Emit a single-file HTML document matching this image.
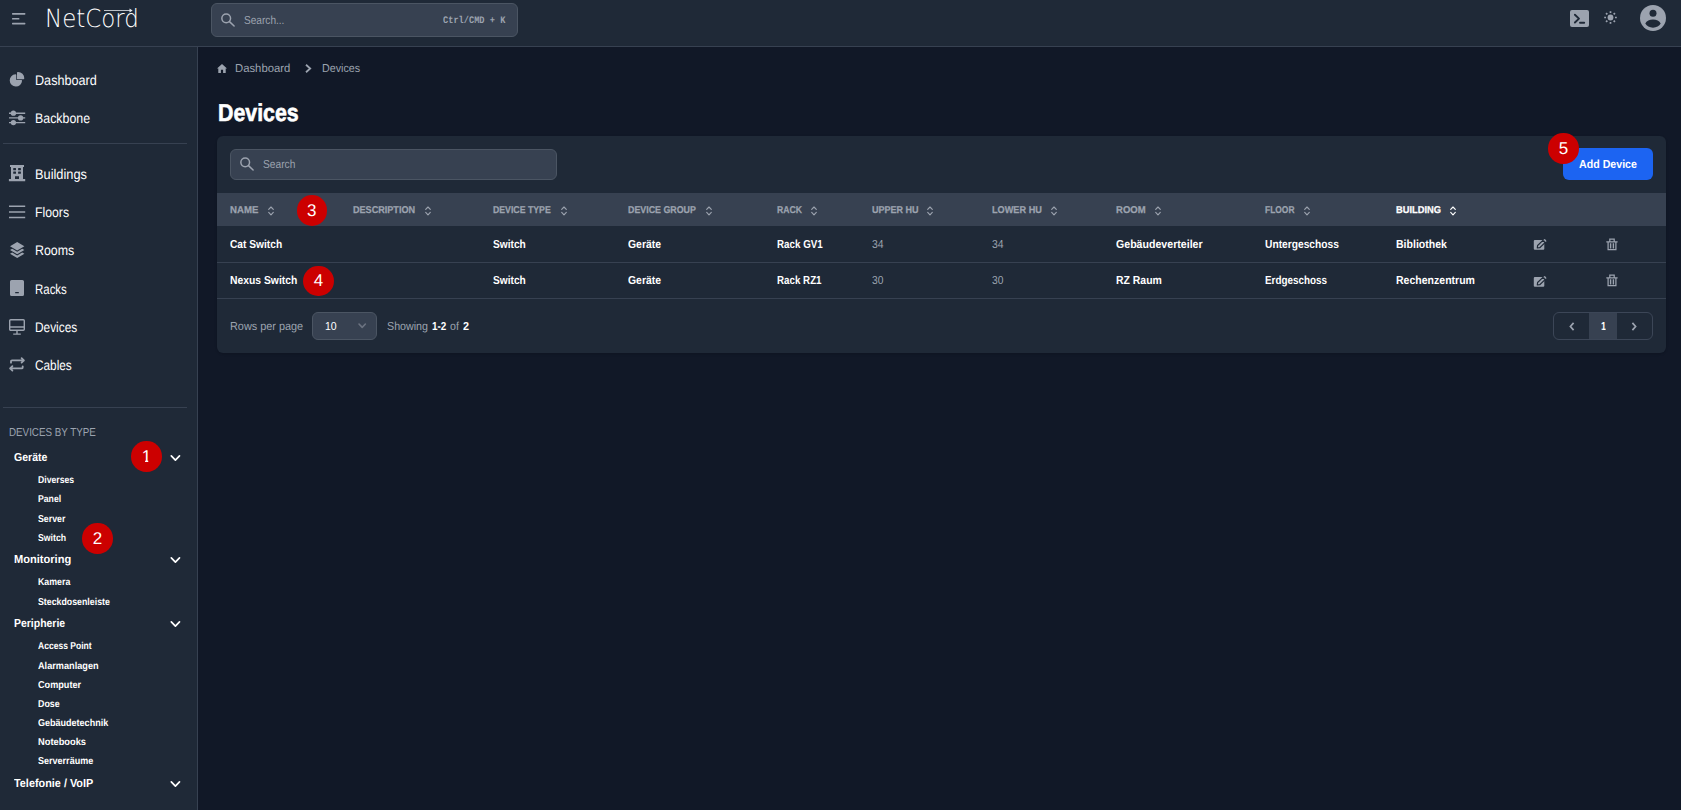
<!DOCTYPE html>
<html lang="en"><head><meta charset="utf-8"><title>NetCord - Devices</title>
<style>
*{box-sizing:border-box;margin:0;padding:0}
html,body{width:1681px;height:810px;overflow:hidden;background:#111827;font-family:"Liberation Sans",Arial,sans-serif}
body{position:relative}
ul{list-style:none}
.t{position:absolute;white-space:nowrap;transform-origin:0 50%;display:block;text-rendering:geometricPrecision}
.i{position:absolute;display:block;overflow:visible}
.abs{position:absolute}
header{position:absolute;left:0;top:0;width:1681px;height:47px;background:#1f2937;border-bottom:1px solid #374151}
aside{position:absolute;left:0;top:47px;width:198px;height:763px;background:#1f2937;border-right:1px solid #374151}
main{position:absolute;left:198px;top:47px;width:1483px;height:763px}
hr{position:absolute;border:0;height:1px;background:#374151}
.card{position:absolute;background:#1f2937;border-radius:6px;box-shadow:0 1px 3px 0 rgba(0,0,0,.1),0 1px 2px -1px rgba(0,0,0,.1)}
.inp{position:absolute;background:#374151;border:1px solid #4b5563;border-radius:6px}
.badge{position:absolute;width:30.4px;height:30.4px;border-radius:50%;background:#cc0000}
.badge .t{left:0;width:30.4px;text-align:center;transform-origin:50% 50%}
table{position:absolute;border-collapse:collapse;table-layout:fixed}
th,td{position:relative;padding:0;text-align:left}
thead tr{background:#374151;height:33px}
tbody tr{height:36px;border-bottom:1px solid #374151}

.nav{font:400 14px/16px "Liberation Sans",Arial,sans-serif;color:#ffffff}
.cap{font:400 11.6px/12px "Liberation Sans",Arial,sans-serif;color:#9ca3af}
.grp{font:700 11.6px/12px "Liberation Sans",Arial,sans-serif;color:#ffffff}
.sub{font:700 10px/11px "Liberation Sans",Arial,sans-serif;color:#ffffff}
.bc{font:400 11.6px/12px "Liberation Sans",Arial,sans-serif;color:#9ca3af}
.h1{font:700 24.4px/27px "Liberation Sans",Arial,sans-serif;color:#ffffff}
.ph{font:400 11.6px/12px "Liberation Sans",Arial,sans-serif;color:#9ca3af}
.kbd{font:700 10px/11px "Liberation Mono",monospace;color:#9ca3af}
.th{font:700 9.9px/11px "Liberation Sans",Arial,sans-serif;color:#9ca3af}
.thw{font:700 9.9px/11px "Liberation Sans",Arial,sans-serif;color:#ffffff}
.td{font:700 11.6px/12px "Liberation Sans",Arial,sans-serif;color:#ffffff}
.tdn{font:400 11.6px/12px "Liberation Sans",Arial,sans-serif;color:#9ca3af}
.btn{font:700 11.6px/12px "Liberation Sans",Arial,sans-serif;color:#ffffff}
.ft{font:400 11.6px/12px "Liberation Sans",Arial,sans-serif;color:#9ca3af}
.ftw{font:700 11.6px/12px "Liberation Sans",Arial,sans-serif;color:#ffffff}
.sel{font:400 11.6px/12px "Liberation Sans",Arial,sans-serif;color:#ffffff}
.logo{font:400 25px/29px "DejaVu Sans Light","DejaVu Sans","Liberation Sans",sans-serif;color:#ffffff}
.bdg{font:400 17px/19px "Liberation Sans",Arial,sans-serif;color:#ffffff}

.h1{-webkit-text-stroke:.6px #fff}.th{-webkit-text-stroke:.25px #9ca3af}.thw{-webkit-text-stroke:.25px #fff}
</style></head><body>
<header>
<button class="abs" style="left:6px;top:6px;width:26px;height:26px;background:none;border:0" aria-label="Toggle sidebar"><svg class="i" style="left:6.0px;top:7.0px" width="14" height="11" viewBox="0 0 14 11" ><g fill="#9ca3af"><rect x="0" y="0" width="13.4" height="1.7" rx=".6"/><rect x="0" y="4.9" width="7.4" height="1.7" rx=".6"/><rect x="0" y="9.7" width="13.4" height="1.7" rx=".6"/></g></svg></button>
<a class="abs" style="left:47px;top:4px;width:92px;height:28px"><span class="t logo" style="left:-1.97px;top:0.0px;transform:scaleX(0.9177);">NetCord</span><svg class="i" style="left:56.5px;top:4.0px" width="29" height="5" viewBox="0 0 29 5" ><path d="M0 2.5h27" stroke="#e5e7eb" stroke-width=".8" fill="none"/><path d="M25.500 .6 28.600 2.500 25.500 4.400Z" fill="#e5e7eb"/></svg></a>
<form class="inp" style="left:211px;top:3px;width:307px;height:34px"><svg class="i" style="left:9.2px;top:8.8px" width="14" height="14" viewBox="0 0 14 14" ><g fill="none" stroke="#9ca3af" stroke-width="1.5"><circle cx="5.2" cy="5.3" r="4.350"/><path d="M8.500 8.600l4.600 4.400" stroke-linecap="round"/></g></svg><span class="t ph" style="left:31.62px;top:11.0px;transform:scaleX(0.8710);">Search...</span><span class="t kbd" style="left:230.72px;top:12.0px;transform:scaleX(0.8659);">Ctrl/CMD + K</span></form>
<svg class="i" style="left:1570.0px;top:10.0px" width="19" height="17" viewBox="0 0 19 17" ><rect width="19" height="17" rx="2" fill="#9ca3af"/><path d="M4.900 4.700 9 8.600 4.900 12.500M10 12.700h4.200" fill="none" stroke="#1f2937" stroke-width="1.9" stroke-linecap="round" stroke-linejoin="round"/></svg>
<svg class="i" style="left:1604.4px;top:11.3px" width="13" height="13" viewBox="0 0 13 13" ><circle cx="6.5" cy="6.5" r="2.900" fill="#9ca3af"/><g stroke="#9ca3af" stroke-width="1.7"><path d="M11.00 6.50L12.80 6.50"/><path d="M9.68 9.68L10.95 10.95"/><path d="M6.50 11.00L6.50 12.80"/><path d="M3.32 9.68L2.05 10.95"/><path d="M2.00 6.50L0.20 6.50"/><path d="M3.32 3.32L2.05 2.05"/><path d="M6.50 2.00L6.50 0.20"/><path d="M9.68 3.32L10.95 2.05"/></g></svg>
<svg class="i" style="left:1640.0px;top:5.0px" width="26" height="26" viewBox="0 0 26 26" ><circle cx="13" cy="13" r="13" fill="#9ca3af"/><circle cx="13" cy="8.300" r="3.500" fill="#1f2937"/><path d="M5.300 18.600C6.500 15.600 9.500 14.500 13 14.500s6.500 1.100 7.700 4.100C19.300 21.200 16.400 22.700 13 22.700S6.700 21.200 5.300 18.600Z" fill="#1f2937"/></svg>
</header>
<aside><nav>
<ul>
<li><svg class="i" style="left:9.3px;top:24.9px" width="16" height="15.27" viewBox="0 0 22 21" ><g fill="#9ca3af"><path d="M16.975 11H10V4.025a1 1 0 0 0-1.066-.998 8.5 8.5 0 1 0 9.039 9.039.999.999 0 0 0-1-1.066h.002Z"/><path d="M12.5 0c-.157 0-.311.01-.565.027A1 1 0 0 0 11 1.02V10h8.975a1 1 0 0 0 1-.935c.013-.188.028-.374.028-.565A8.51 8.51 0 0 0 12.5 0Z"/></g></svg><a class="t nav" style="left:34.61px;top:25.0px;transform:scaleX(0.9014);">Dashboard</a></li>
<li><svg class="i" style="left:9.0px;top:63.0px" width="16" height="16" viewBox="0 0 16 16" ><g stroke="#9ca3af" stroke-width="1.350" fill="none"><path d="M0 3.2h16.2M0 7.9h16.2M0 12.6h16.2"/></g><g fill="#9ca3af"><circle cx="4.4" cy="3.2" r="2.650"/><circle cx="11.6" cy="7.9" r="2.650"/><circle cx="4.4" cy="12.6" r="2.650"/></g></svg><a class="t nav" style="left:34.61px;top:63.0px;transform:scaleX(0.8840);">Backbone</a></li>
</ul>
<hr style="left:3px;top:96px;width:184px">
<ul>
<li><svg class="i" style="left:9.0px;top:118.0px" width="16" height="16" viewBox="0 0 16 16" ><path fill="#9ca3af" fill-rule="evenodd" d="M1 0h14v2h-1V14h2.200v2.200H-.1V14H2V2H1Z M4.200 3.400a.5.5 0 0 1 .5-.5h1.800a.5.5 0 0 1 .5.5v1.300a.5.5 0 0 1-.5.5H4.700a.5.5 0 0 1-.5-.5Z M9.100 3.400a.5.5 0 0 1 .5-.5h1.800a.5.5 0 0 1 .5.5v1.300a.5.5 0 0 1-.5.5H9.600a.5.5 0 0 1-.5-.5Z M4.200 6.900a.5.5 0 0 1 .5-.5h1.800a.5.5 0 0 1 .5.5v1.400a.5.5 0 0 1-.5.5H4.700a.5.5 0 0 1-.5-.5Z M9.100 6.900a.5.5 0 0 1 .5-.5h1.800a.5.5 0 0 1 .5.5v1.400a.5.5 0 0 1-.5.5H9.600a.5.5 0 0 1-.5-.5Z M6 11.200h4V14H6Z"/></svg><a class="t nav" style="left:34.55px;top:119.0px;transform:scaleX(0.9141);">Buildings</a></li>
<li><svg class="i" style="left:9.0px;top:158.0px" width="16" height="14" viewBox="0 0 16 14" ><path stroke="#9ca3af" stroke-width="1.5" d="M0 1.200h16.200M0 6.900h16.200M0 12.600h16.200"/></svg><a class="t nav" style="left:34.62px;top:157.0px;transform:scaleX(0.8766);">Floors</a></li>
<li><svg class="i" style="left:9.7px;top:194.9px" width="14.4" height="16.2" viewBox="0 0 14.4 16.2" ><g fill="#9ca3af"><path d="M7.2 0 14.4 4.3 7.2 8.6 0 4.3Z"/><path d="M0 8.05 2.22 6.73 7.2 9.7 12.18 6.73 14.4 8.05 7.2 12.35Z"/><path d="M0 11.8 2.22 10.48 7.2 13.45 12.18 10.48 14.4 11.8 7.2 16.1Z"/></g></svg><a class="t nav" style="left:34.73px;top:195.0px;transform:scaleX(0.8867);">Rooms</a></li>
<li><svg class="i" style="left:10.0px;top:233.0px" width="14" height="16" viewBox="0 0 14 16" ><path fill="#9ca3af" fill-rule="evenodd" d="M1.6 0h10.8A1.6 1.6 0 0 1 14 1.6v12.8a1.6 1.6 0 0 1-1.6 1.6H1.6A1.6 1.6 0 0 1 0 14.4V1.6A1.6 1.6 0 0 1 1.6 0Z M5.2 12v1.2h3.6V12Z"/></svg><a class="t nav" style="left:34.57px;top:234.0px;transform:scaleX(0.8173);">Racks</a></li>
<li><svg class="i" style="left:9.0px;top:272.0px" width="16" height="16" viewBox="0 0 16 16" ><g fill="none" stroke="#9ca3af" stroke-width="1.4"><rect x=".7" y=".7" width="14.6" height="10.6" rx="1"/><path d="M.7 8h14.6M8 11.3v3.6M4.2 15.1h7.6"/></g></svg><a class="t nav" style="left:34.72px;top:272.0px;transform:scaleX(0.8465);">Devices</a></li>
<li><svg class="i" style="left:9.2px;top:310.0px" width="16" height="15" viewBox="0 0 16 15" ><path fill="none" stroke="#9ca3af" stroke-width="1.8" stroke-linecap="round" stroke-linejoin="round" d="M2 5.700V4.400a1 1 0 0 1 1-1H14.900M12.600 1.200 14.900 3.400 12.600 5.600M13.700 9.300v1.100a1 1 0 0 1-1 1H1.100M3.400 9.200 1.100 11.400 3.400 13.600"/></svg><a class="t nav" style="left:34.92px;top:310.0px;transform:scaleX(0.8436);">Cables</a></li>
</ul>
<hr style="left:3px;top:360px;width:184px">
<h3 class="t cap" style="left:9.29px;top:380.0px;transform:scaleX(0.8453);">DEVICES BY TYPE</h3>
<ul>
<li><a class="t grp" style="left:13.96px;top:405.0px;transform:scaleX(0.9114);">Geräte</a><svg class="i" style="left:170.3px;top:407.4px" width="11" height="8" viewBox="0 0 11 8" ><path fill="none" stroke="#fff" stroke-width="1.7" stroke-linecap="round" stroke-linejoin="round" d="M1.300 1.900 5.400 6.100 9.500 1.900"/></svg>
<ul>
<li><a class="t sub" style="left:37.70px;top:428.0px;transform:scaleX(0.8658);">Diverses</a></li>
<li><a class="t sub" style="left:37.70px;top:447.0px;transform:scaleX(0.8674);">Panel</a></li>
<li><a class="t sub" style="left:38.00px;top:467.0px;transform:scaleX(0.8793);">Server</a></li>
<li><a class="t sub" style="left:38.00px;top:486.0px;transform:scaleX(0.8709);">Switch</a></li>
</ul>
</li>
<li><a class="t grp" style="left:13.82px;top:507.0px;transform:scaleX(0.9549);">Monitoring</a><svg class="i" style="left:170.3px;top:509.2px" width="11" height="8" viewBox="0 0 11 8" ><path fill="none" stroke="#fff" stroke-width="1.7" stroke-linecap="round" stroke-linejoin="round" d="M1.300 1.900 5.400 6.100 9.500 1.900"/></svg>
<ul>
<li><a class="t sub" style="left:37.64px;top:530.0px;transform:scaleX(0.8797);">Kamera</a></li>
<li><a class="t sub" style="left:38.00px;top:550.0px;transform:scaleX(0.8792);">Steckdosenleiste</a></li>
</ul>
</li>
<li><a class="t grp" style="left:13.68px;top:571.0px;transform:scaleX(0.9013);">Peripherie</a><svg class="i" style="left:170.3px;top:573.2px" width="11" height="8" viewBox="0 0 11 8" ><path fill="none" stroke="#fff" stroke-width="1.7" stroke-linecap="round" stroke-linejoin="round" d="M1.300 1.900 5.400 6.100 9.500 1.900"/></svg>
<ul>
<li><a class="t sub" style="left:38.00px;top:594.0px;transform:scaleX(0.8539);">Access Point</a></li>
<li><a class="t sub" style="left:38.00px;top:614.0px;transform:scaleX(0.9158);">Alarmanlagen</a></li>
<li><a class="t sub" style="left:38.00px;top:633.0px;transform:scaleX(0.9118);">Computer</a></li>
<li><a class="t sub" style="left:37.87px;top:652.0px;transform:scaleX(0.8849);">Dose</a></li>
<li><a class="t sub" style="left:38.00px;top:671.0px;transform:scaleX(0.9021);">Gebäudetechnik</a></li>
<li><a class="t sub" style="left:37.87px;top:690.0px;transform:scaleX(0.9286);">Notebooks</a></li>
<li><a class="t sub" style="left:38.00px;top:709.0px;transform:scaleX(0.9032);">Serverräume</a></li>
</ul>
</li>
<li><a class="t grp" style="left:13.96px;top:731.0px;transform:scaleX(0.9369);">Telefonie / VoIP</a><svg class="i" style="left:170.3px;top:733.2px" width="11" height="8" viewBox="0 0 11 8" ><path fill="none" stroke="#fff" stroke-width="1.7" stroke-linecap="round" stroke-linejoin="round" d="M1.300 1.900 5.400 6.100 9.500 1.900"/></svg>
</li>
</ul>
</nav></aside>
<main>
<nav aria-label="Breadcrumb">
<svg class="i" style="left:19.0px;top:17.0px" width="10" height="9" viewBox="0 0 10 9" ><path fill="#9ca3af" d="M5 0 10 4.400H8.700V9H6.100V5.800H3.900V9H1.300V4.400H0Z"/></svg>
<a class="t bc" style="left:36.69px;top:16.0px;transform:scaleX(0.9749);">Dashboard</a>
<svg class="i" style="left:106.5px;top:17.0px" width="7" height="9" viewBox="0 0 7 9" ><path fill="none" stroke="#9ca3af" stroke-width="1.8" d="M1 .8 5.200 4.500 1 8.200"/></svg>
<span class="t bc" style="left:124.30px;top:16.0px;transform:scaleX(0.9251);">Devices</span>
</nav>
<h1 class="t h1" style="left:20.21px;top:53.0px;transform:scaleX(0.8746);">Devices</h1>
<section class="card" style="left:19px;top:89px;width:1449px;height:217px">
<form class="inp" style="left:13px;top:13px;width:327px;height:31px"><svg class="i" style="left:9.2px;top:7.1px" width="14" height="14" viewBox="0 0 14 14" ><g fill="none" stroke="#9ca3af" stroke-width="1.5"><circle cx="5.2" cy="5.3" r="4.350"/><path d="M8.500 8.600l4.600 4.400" stroke-linecap="round"/></g></svg><span class="t ph" style="left:31.83px;top:9.0px;transform:scaleX(0.8806);">Search</span></form>
<button class="abs" style="left:1346px;top:12px;width:90px;height:32px;background:#1c64f2;border:0;border-radius:6px"><span class="t btn" style="left:16.47px;top:11.0px;transform:scaleX(0.9175);">Add Device</span></button>
<table style="left:0;top:57px;width:1449px"><colgroup>
<col style="width:123.0px">
<col style="width:140.3px">
<col style="width:135.0px">
<col style="width:148.4px">
<col style="width:95.0px">
<col style="width:120.0px">
<col style="width:124.3px">
<col style="width:148.7px">
<col style="width:130.9px">
<col style="width:138.4px">
<col style="width:73.0px">
<col style="width:72.0px">
</colgroup><thead><tr>
<th><span class="t th" style="left:12.78px;top:12.0px;transform:scaleX(0.9748);">NAME</span><svg class="i" style="left:50.6px;top:12.5px" width="6" height="10" viewBox="0 0 6 10" ><path fill="none" stroke="#9ca3af" stroke-width="1.15" stroke-linecap="round" stroke-linejoin="round" d="M.7 3.400 3 1 5.300 3.400M.7 6.400 3 8.800 5.300 6.400"/></svg></th>
<th><span class="t th" style="left:12.70px;top:12.0px;transform:scaleX(0.9196);">DESCRIPTION</span><svg class="i" style="left:84.8px;top:12.5px" width="6" height="10" viewBox="0 0 6 10" ><path fill="none" stroke="#9ca3af" stroke-width="1.15" stroke-linecap="round" stroke-linejoin="round" d="M.7 3.400 3 1 5.300 3.400M.7 6.400 3 8.800 5.300 6.400"/></svg></th>
<th><span class="t th" style="left:12.44px;top:12.0px;transform:scaleX(0.8837);">DEVICE TYPE</span><svg class="i" style="left:80.5px;top:12.5px" width="6" height="10" viewBox="0 0 6 10" ><path fill="none" stroke="#9ca3af" stroke-width="1.15" stroke-linecap="round" stroke-linejoin="round" d="M.7 3.400 3 1 5.300 3.400M.7 6.400 3 8.800 5.300 6.400"/></svg></th>
<th><span class="t th" style="left:12.44px;top:12.0px;transform:scaleX(0.8965);">DEVICE GROUP</span><svg class="i" style="left:90.5px;top:12.5px" width="6" height="10" viewBox="0 0 6 10" ><path fill="none" stroke="#9ca3af" stroke-width="1.15" stroke-linecap="round" stroke-linejoin="round" d="M.7 3.400 3 1 5.300 3.400M.7 6.400 3 8.800 5.300 6.400"/></svg></th>
<th><span class="t th" style="left:13.76px;top:12.0px;transform:scaleX(0.8757);">RACK</span><svg class="i" style="left:47.1px;top:12.5px" width="6" height="10" viewBox="0 0 6 10" ><path fill="none" stroke="#9ca3af" stroke-width="1.15" stroke-linecap="round" stroke-linejoin="round" d="M.7 3.400 3 1 5.300 3.400M.7 6.400 3 8.800 5.300 6.400"/></svg></th>
<th><span class="t th" style="left:13.20px;top:12.0px;transform:scaleX(0.9129);">UPPER HU</span><svg class="i" style="left:68.7px;top:12.5px" width="6" height="10" viewBox="0 0 6 10" ><path fill="none" stroke="#9ca3af" stroke-width="1.15" stroke-linecap="round" stroke-linejoin="round" d="M.7 3.400 3 1 5.300 3.400M.7 6.400 3 8.800 5.300 6.400"/></svg></th>
<th><span class="t th" style="left:12.98px;top:12.0px;transform:scaleX(0.9274);">LOWER HU</span><svg class="i" style="left:72.1px;top:12.5px" width="6" height="10" viewBox="0 0 6 10" ><path fill="none" stroke="#9ca3af" stroke-width="1.15" stroke-linecap="round" stroke-linejoin="round" d="M.7 3.400 3 1 5.300 3.400M.7 6.400 3 8.800 5.300 6.400"/></svg></th>
<th><span class="t th" style="left:12.87px;top:12.0px;transform:scaleX(0.9646);">ROOM</span><svg class="i" style="left:51.8px;top:12.5px" width="6" height="10" viewBox="0 0 6 10" ><path fill="none" stroke="#9ca3af" stroke-width="1.15" stroke-linecap="round" stroke-linejoin="round" d="M.7 3.400 3 1 5.300 3.400M.7 6.400 3 8.800 5.300 6.400"/></svg></th>
<th><span class="t th" style="left:12.87px;top:12.0px;transform:scaleX(0.8536);">FLOOR</span><svg class="i" style="left:52.8px;top:12.5px" width="6" height="10" viewBox="0 0 6 10" ><path fill="none" stroke="#9ca3af" stroke-width="1.15" stroke-linecap="round" stroke-linejoin="round" d="M.7 3.400 3 1 5.300 3.400M.7 6.400 3 8.800 5.300 6.400"/></svg></th>
<th><span class="t thw" style="left:13.11px;top:12.0px;transform:scaleX(0.9408);">BUILDING</span><svg class="i" style="left:67.9px;top:12.5px" width="6" height="10" viewBox="0 0 6 10" ><path fill="none" stroke="#fff" stroke-width="1.15" stroke-linecap="round" stroke-linejoin="round" d="M.7 3.400 3 1 5.300 3.400M.7 6.400 3 8.800 5.300 6.400"/></svg></th>
<th></th><th></th></tr></thead><tbody>
<tr>
<td><span class="t td" style="left:13.00px;top:13.0px;transform:scaleX(0.8796);">Cat Switch</span></td>
<td></td>
<td><span class="t td" style="left:12.96px;top:13.0px;transform:scaleX(0.8778);">Switch</span></td>
<td><span class="t td" style="left:13.16px;top:13.0px;transform:scaleX(0.9007);">Geräte</span></td>
<td><span class="t td" style="left:13.02px;top:13.0px;transform:scaleX(0.8445);">Rack GV1</span></td>
<td><span class="t tdn" style="left:13.76px;top:13.0px;transform:scaleX(0.8968);">34</span></td>
<td><span class="t tdn" style="left:13.76px;top:13.0px;transform:scaleX(0.8968);">34</span></td>
<td><span class="t td" style="left:13.00px;top:13.0px;transform:scaleX(0.9145);">Gebäudeverteiler</span></td>
<td><span class="t td" style="left:13.13px;top:13.0px;transform:scaleX(0.8822);">Untergeschoss</span></td>
<td><span class="t td" style="left:13.04px;top:13.0px;transform:scaleX(0.9092);">Bibliothek</span></td>
<td><svg class="i" style="left:12.0px;top:12.0px" width="15" height="13" viewBox="0 0 15 13" ><rect x=".8" y="2" width="10.5" height="9.8" rx="1" fill="#9ca3af"/><polygon points="4.30,9.90 4.60,7.47 9.93,2.37 12.07,4.60 6.74,9.71" fill="#9ca3af" stroke="#1f2937" stroke-width="1.15" stroke-linejoin="round"/><polygon points="10.57,1.75 11.37,0.99 12.72,1.83 13.51,3.22 12.71,3.98" fill="#9ca3af"/></svg></td><td><svg class="i" style="left:12.5px;top:11.6px" width="12" height="13" viewBox="0 0 12 13" ><g fill="none" stroke="#9ca3af" stroke-width="1.25"><path d="M.3 3.800h11.300M3.800 3.600V1.200h4.400v2.400M2.100 4v7.600h7.800V4"/><path stroke-width="1.4" d="M4.600 5.300v5.200M7.400 5.300v5.200"/></g></svg></td>
</tr>
<tr>
<td><span class="t td" style="left:12.52px;top:12.0px;transform:scaleX(0.8926);">Nexus Switch</span></td>
<td></td>
<td><span class="t td" style="left:13.16px;top:12.0px;transform:scaleX(0.8774);">Switch</span></td>
<td><span class="t td" style="left:13.16px;top:12.0px;transform:scaleX(0.9004);">Geräte</span></td>
<td><span class="t td" style="left:13.66px;top:12.0px;transform:scaleX(0.8431);">Rack RZ1</span></td>
<td><span class="t tdn" style="left:13.04px;top:12.0px;transform:scaleX(0.8820);">30</span></td>
<td><span class="t tdn" style="left:13.04px;top:12.0px;transform:scaleX(0.8820);">30</span></td>
<td><span class="t td" style="left:12.52px;top:12.0px;transform:scaleX(0.9010);">RZ Raum</span></td>
<td><span class="t td" style="left:13.66px;top:12.0px;transform:scaleX(0.8522);">Erdgeschoss</span></td>
<td><span class="t td" style="left:13.19px;top:12.0px;transform:scaleX(0.9077);">Rechenzentrum</span></td>
<td><svg class="i" style="left:12.0px;top:12.0px" width="15" height="13" viewBox="0 0 15 13" ><rect x=".8" y="2" width="10.5" height="9.8" rx="1" fill="#9ca3af"/><polygon points="4.30,9.90 4.60,7.47 9.93,2.37 12.07,4.60 6.74,9.71" fill="#9ca3af" stroke="#1f2937" stroke-width="1.15" stroke-linejoin="round"/><polygon points="10.57,1.75 11.37,0.99 12.72,1.83 13.51,3.22 12.71,3.98" fill="#9ca3af"/></svg></td><td><svg class="i" style="left:12.5px;top:11.6px" width="12" height="13" viewBox="0 0 12 13" ><g fill="none" stroke="#9ca3af" stroke-width="1.25"><path d="M.3 3.800h11.300M3.800 3.600V1.200h4.400v2.400M2.100 4v7.600h7.800V4"/><path stroke-width="1.4" d="M4.600 5.300v5.200M7.400 5.300v5.200"/></g></svg></td>
</tr>
</tbody></table>
<span class="t ft" style="left:12.53px;top:185.0px;transform:scaleX(0.9379);">Rows per page</span>
<div class="inp" style="left:95px;top:176px;width:65px;height:28px"><span class="t sel" style="left:11.51px;top:8.0px;transform:scaleX(0.9071);">10</span><svg class="i" style="left:45.0px;top:10.3px" width="8.4" height="5.6" viewBox="0 0 8.4 5.6" ><path fill="none" stroke="#6b7280" stroke-width="1.6" stroke-linecap="round" stroke-linejoin="round" d="M1 1 4.200 4.400 7.400 1"/></svg></div>
<span class="t ft" style="left:169.75px;top:185.0px;transform:scaleX(0.9218);">Showing</span>
<span class="t ftw" style="left:214.78px;top:185.0px;transform:scaleX(0.8544);">1-2</span>
<span class="t ft" style="left:233.08px;top:185.0px;transform:scaleX(0.9168);">of</span>
<span class="t ftw" style="left:246.00px;top:185.0px;transform:scaleX(0.9331);">2</span>
<nav class="abs" style="left:1336px;top:176px;width:100px;height:28px;border:1px solid #3c4657;border-radius:6px;overflow:hidden">
<svg class="i" style="left:15.2px;top:8.8px" width="6" height="9" viewBox="0 0 6 9" ><path fill="none" stroke="#9ca3af" stroke-width="1.7" d="M4.600 .9 1.400 4.500 4.600 8.100"/></svg>
<span class="abs" style="left:35.3px;top:0;width:27.5px;height:26px;background:#374151"><span class="t ftw" style="left:11.95px;top:8.0px;transform:scaleX(0.7777);clip-path:polygon(0 0,100% 0,100% 73%,78% 73%,78% 100%,30% 100%,30% 73%,0 73%);">1</span></span>
<svg class="i" style="left:76.7px;top:8.8px" width="6" height="9" viewBox="0 0 6 9" ><path fill="none" stroke="#9ca3af" stroke-width="1.7" d="M1.400 .9 4.600 4.500 1.400 8.100"/></svg>
</nav>
</section>
</main>
<div class="badge" style="left:131.4px;top:441.2px"><span class="t bdg" style="top:5.9px;clip-path:polygon(0 0,100% 0,100% 67%,55.5% 67%,55.5% 100%,45% 100%,45% 67%,0 67%);">1</span></div>
<div class="badge" style="left:82.4px;top:523.2px"><span class="t bdg" style="top:5.9px;">2</span></div>
<div class="badge" style="left:296.5px;top:195.3px"><span class="t bdg" style="top:5.9px;">3</span></div>
<div class="badge" style="left:303.4px;top:265.5px"><span class="t bdg" style="top:5.9px;">4</span></div>
<div class="badge" style="left:1548.2px;top:133.2px"><span class="t bdg" style="top:5.9px;">5</span></div>
</body></html>
